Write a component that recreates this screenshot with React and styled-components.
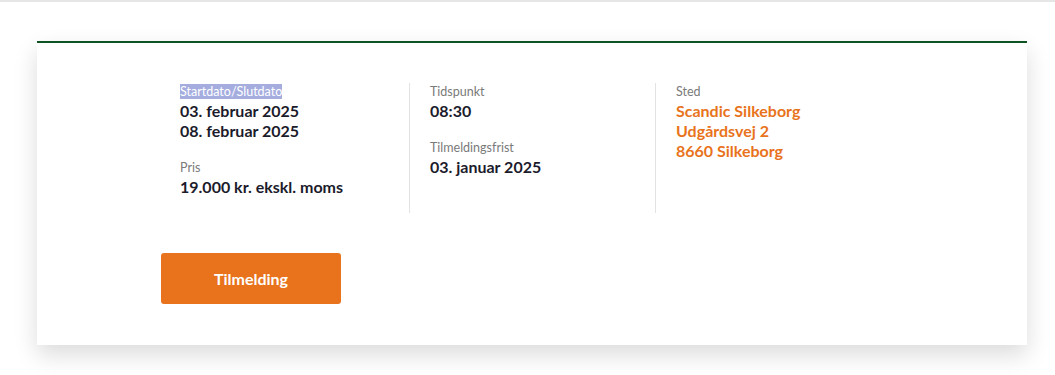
import React from 'react';
import styled, { createGlobalStyle } from 'styled-components';

const GlobalStyle = createGlobalStyle`
  html, body {
    margin: 0;
    padding: 0;
    background: #fff;
    font-family: Lato, "Open Sans", sans-serif;
  }
`;

const TopRule = styled.div`
  height: 2px;
  background-color: #e6e6e6;
`;

const Page = styled.div`
  padding: 39px 28px 30px 37px;
`;

const Card = styled.section`
  width: 990px;
  background: #fff;
  border-top: 2px solid #0f5323;
  box-shadow: 0 10px 22px rgba(0, 0, 0, 0.14);
  padding: 40px 0 41px 124px;
  box-sizing: border-box;
`;

const Details = styled.div`
  display: flex;
`;

const Column = styled.div`
  width: ${p => (p.first ? '248px' : '246px')};
  box-sizing: border-box;
  min-height: 130px;
  padding-top: 1px;
  padding-left: ${p => (p.first ? '19px' : '20px')};
  border-left: ${p => (p.first ? 'none' : '1px solid #e3e3e3')};
`;

const Field = styled.div`
  & + & {
    margin-top: 19px;
  }
`;

const Label = styled.div`
  font-size: 12.5px;
  line-height: 16px;
  color: #7a7a7a;
  margin-bottom: 1px;
`;

const Selected = styled.span`
  background-color: #a5addf;
  color: #fff;
`;

const Value = styled.div`
  font-size: 16px;
  line-height: 20px;
  font-weight: 700;
  color: ${p => (p.accent ? '#e8731c' : '#1b1b2b')};
`;

const Button = styled.button`
  margin-top: 40px;
  width: 180px;
  height: 51px;
  border: none;
  border-radius: 3px;
  background-color: #e8731c;
  color: #fff;
  font-family: inherit;
  font-size: 16px;
  font-weight: 700;
  cursor: pointer;
`;

export default function App() {
  return (
    <>
      <GlobalStyle />
      <TopRule />
      <Page>
        <Card>
          <Details>
            <Column first>
              <Field>
                <Label><Selected>Startdato/Slutdato</Selected></Label>
                <Value>03. februar 2025</Value>
                <Value>08. februar 2025</Value>
              </Field>
              <Field>
                <Label>Pris</Label>
                <Value>19.000 kr. ekskl. moms</Value>
              </Field>
            </Column>
            <Column>
              <Field>
                <Label>Tidspunkt</Label>
                <Value>08:30</Value>
              </Field>
              <Field>
                <Label>Tilmeldingsfrist</Label>
                <Value>03. januar 2025</Value>
              </Field>
            </Column>
            <Column>
              <Field>
                <Label>Sted</Label>
                <Value accent>Scandic Silkeborg</Value>
                <Value accent>Udgårdsvej 2</Value>
                <Value accent>8660 Silkeborg</Value>
              </Field>
            </Column>
          </Details>
          <Button>Tilmelding</Button>
        </Card>
      </Page>
    </>
  );
}
